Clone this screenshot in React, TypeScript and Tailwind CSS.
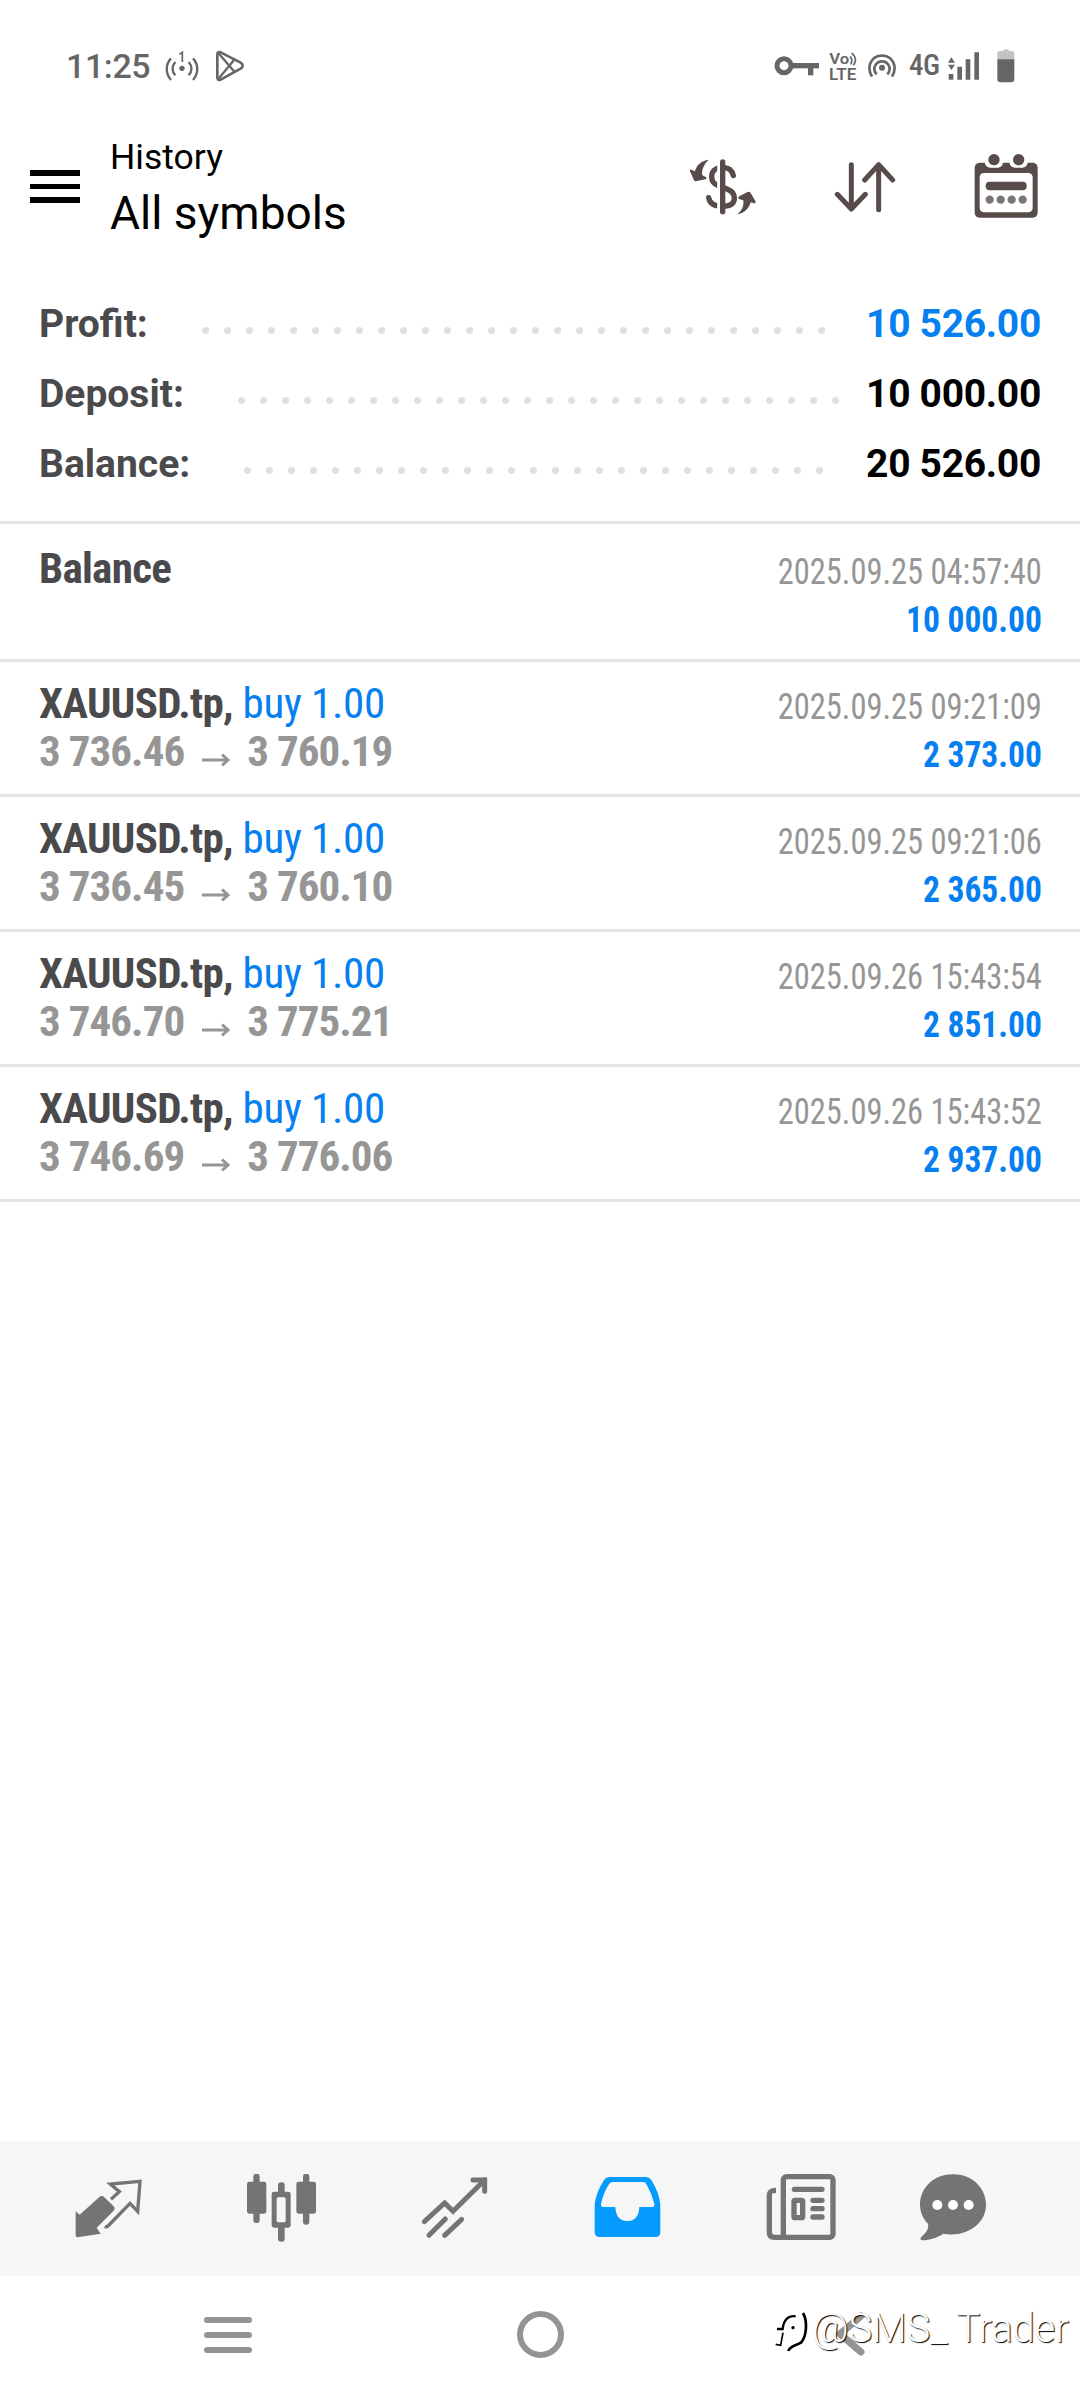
import React from "react";

type Deal = {
  title: string;
  side?: string;
  from?: string;
  to?: string;
  time: string;
  amount: string;
};

const summary = [
  { label: "Profit:", value: "10 526.00", dots: 29, start: "ml-[54px]", color: "text-[#067ff0]" },
  { label: "Deposit:", value: "10 000.00", dots: 28, start: "ml-[54px]", color: "text-black" },
  { label: "Balance:", value: "20 526.00", dots: 27, start: "ml-[54px]", color: "text-black" },
];

const deals: Deal[] = [
  { title: "Balance", time: "2025.09.25 04:57:40", amount: "10 000.00" },
  { title: "XAUUSD.tp,", side: "buy 1.00", from: "3 736.46", to: "3 760.19", time: "2025.09.25 09:21:09", amount: "2 373.00" },
  { title: "XAUUSD.tp,", side: "buy 1.00", from: "3 736.45", to: "3 760.10", time: "2025.09.25 09:21:06", amount: "2 365.00" },
  { title: "XAUUSD.tp,", side: "buy 1.00", from: "3 746.70", to: "3 775.21", time: "2025.09.26 15:43:54", amount: "2 851.00" },
  { title: "XAUUSD.tp,", side: "buy 1.00", from: "3 746.69", to: "3 776.06", time: "2025.09.26 15:43:52", amount: "2 937.00" },
];

function StatusBar() {
  return (
    <div className="h-[130px] pt-px flex items-center text-[#666] pl-[66px] pr-[65px]">
      <span className="text-[34px] font-medium w-[98px] leading-none tracking-[-0.4px]">11:25</span>
      <svg className="w-[36px] h-[36px]" viewBox="370 56 108 108" fill="none" stroke="currentColor" strokeWidth="7">
        <path d="M391 87C374 105 374 133 391 152M457 87C474 105 474 133 457 152" />
        <path d="M404 98C393 110 393 126 404 138M444 98C455 110 455 126 444 138" />
        <circle cx="424" cy="117" r="8" fill="currentColor" stroke="none" />
        <path d="M416 75L425 69V98" strokeWidth="5" />
      </svg>
      <svg className="w-[30px] h-[32px] ml-[15px]" viewBox="525 60 90 96" fill="none" stroke="currentColor" strokeWidth="8" strokeLinejoin="round">
        <path d="M532 74Q532 64 542 67L602 98Q614 107 602 116L542 149Q532 152 532 142Z" />
        <path d="M535 69L584 126M535 147L584 88" strokeWidth="7" />
      </svg>

      <div className="ml-auto flex items-center">
        <svg className="w-[46px] h-[30px]" viewBox="43 62 138 90" fill="none" stroke="currentColor">
          <circle cx="73" cy="106" r="21" strokeWidth="15" />
          <path d="M96 106H178" strokeWidth="16" />
          <path d="M153 108V135" strokeWidth="16" />
        </svg>
        <svg className="w-[32px] h-[38px] ml-[7px]" viewBox="202 50 96 114" fill="currentColor">
          <text x="209" y="101" fontSize="45" fontWeight="600" textLength="60" lengthAdjust="spacingAndGlyphs">Vo</text>
          <path d="M271 78Q281 89 273 102M276 68Q296 86 281 105" fill="none" stroke="currentColor" strokeWidth="5" />
          <text x="208" y="148" fontSize="51" fontWeight="600" textLength="82" lengthAdjust="spacingAndGlyphs">LTE</text>
        </svg>
        <svg className="w-[30px] h-[26px] ml-[8px]" viewBox="323 68 90 78" fill="none" stroke="currentColor" strokeWidth="8">
          <circle cx="368" cy="112" r="9" fill="currentColor" stroke="none" />
          <path d="M338 139C320 109 336 76 368 76C400 76 416 109 398 139" />
          <path d="M352 132C337 115 349 93 368 93C387 93 399 115 384 132" />
        </svg>
        <span className="text-[29px] font-medium font-stretch-condensed leading-none ml-[12px] w-[39px] tracking-[-0.6px]">4G</span>
        <svg className="w-[31px] h-[28px]" viewBox="566 65 93 84" fill="currentColor">
          <path d="M566 97L576 81L587 97ZM566 103L576 119L587 103ZM568 131H582V148H568ZM594 109H608V148H594ZM619 87H633V148H619ZM645 66H659V148H645Z" />
        </svg>
        <svg className="w-[18px] h-[34px] ml-[18px]" viewBox="713 56 54 102">
          <path d="M714 88V68Q714 62 722 62H730Q732 57 740 57Q748 57 750 62H757Q765 62 765 68V88Z" fill="#c4c4c4" />
          <path d="M714 87H765V146Q765 156 755 156H724Q714 156 714 146Z" fill="currentColor" />
        </svg>
      </div>
    </div>
  );
}

function Header() {
  return (
    <header className="h-[116px] flex items-center text-black pl-[30px] pr-[41px]">
      <button aria-label="Menu" className="w-[50px] flex flex-col gap-[8px] -mt-[3px]">
        <span className="h-[6px] bg-black" />
        <span className="h-[5px] bg-black" />
        <span className="h-[6px] bg-black" />
      </button>
      <div className="ml-[30px] h-[116px] flex flex-col">
        <span className="text-[35.5px] leading-[44px] mt-[5px]">History</span>
        <span className="text-[46px] leading-[56px] mt-[6px]">All symbols</span>
      </div>

      <div className="ml-auto flex items-center text-[#584c4a]">
        <svg className="w-[68px] h-[56px] -mt-[2px]" viewBox="85 87 204 168" fill="none" stroke="currentColor" strokeWidth="16" strokeLinecap="round">
          <path d="M218 137C214 118 203 112 185 112C165 112 153 124 153 140C153 160 168 166 185 172C208 179 221 186 221 205C221 222 206 229 185 229C162 229 147 222 144 203" />
          <path d="M174 98V242" stroke="#fff" strokeWidth="9" strokeLinecap="butt" />
          <path d="M186 96V245" />
          <path d="M144 89C121 92 107 106 103 124L92 119Q86 117 88 124L100 151Q102 155 109 153L134 148Q141 145 135 141L125 136C122 119 130 103 144 89Z" fill="currentColor" stroke="none" />
          <path d="M230 253C244 241 250 228 248 211L235 207Q230 204 236 199L259 187Q267 183 270 189L284 213Q287 222 280 220L270 217C266 235 249 251 230 253Z" fill="currentColor" stroke="none" />
        </svg>
        <svg className="w-[62px] h-[52px] ml-[77px] -mt-[2px]" viewBox="522 92 186 156" fill="none" stroke="currentColor" strokeWidth="15" strokeLinecap="round" strokeLinejoin="round">
          <path d="M574 103V236M532 192L574 236L616 192" />
          <path d="M656 238V103M614 149L656 103L698 149" />
        </svg>
        <svg className="w-[64px] h-[64px] ml-[78px] mr-px -mt-[4px]" viewBox="943 71 192 192">
          <rect x="945" y="97" width="189" height="165" rx="15" fill="currentColor" />
          <rect x="960" y="128" width="159" height="118" rx="13" fill="#fff" />
          <path d="M975 88V96Q978 112 992 112H1014Q1028 112 1030 96V88ZM1049 88V96Q1052 112 1066 112H1088Q1102 112 1104 96V88Z" fill="#fff" />
          <circle cx="1003" cy="88" r="17" fill="currentColor" />
          <circle cx="1077" cy="88" r="17" fill="currentColor" />
          <rect x="978" y="154" width="123" height="26" rx="12" fill="currentColor" />
          <g fill="#7b7674">
            <circle cx="990" cy="208" r="12.5" />
            <circle cx="1023" cy="208" r="12.5" />
            <circle cx="1056" cy="208" r="12.5" />
            <circle cx="1089" cy="208" r="12.5" />
          </g>
        </svg>
      </div>
    </header>
  );
}

function Summary() {
  return (
    <section className="pt-[43px] pb-[22px] pl-[39px] pr-[39px] border-b-[3px] border-[#e4e4e4]">
      {summary.map((row) => (
        <div key={row.label} className="h-[70px] flex items-center text-[39px] leading-[70px] font-bold">
          <span className="text-[#4a4a4d]">{row.label}</span>
          <span className={`flex gap-[15px] mt-[12px] ${row.start}`}>
            {Array.from({ length: row.dots }, (_, i) => (
              <i key={i} className="size-[7px] rounded-full bg-[#e0e0e0]" />
            ))}
          </span>
          <span className={`ml-auto whitespace-nowrap tracking-[-0.3px] ${row.color}`}>{row.value}</span>
        </div>
      ))}
    </section>
  );
}

function DealRow({ deal }: { deal: Deal }) {
  return (
    <div
      className={`flex justify-between pl-[39px] pr-[38px] border-b-[3px] border-[#e4e4e4] font-stretch-condensed whitespace-nowrap ${
        deal.side ? "h-[135px] pt-[17px]" : "h-[138px] pt-[20px]"
      }`}
    >
      <div className="text-[43px] leading-[48px]">
        <div>
          <span className="font-bold text-[#4a4a4d] tracking-[-0.7px]">{deal.title}</span>
          {deal.side && <span className="text-[#067ff0] tracking-[-0.3px]"> {deal.side}</span>}
        </div>
        {deal.from && (
          <div className="flex items-center font-bold text-[#969696]">
            <span className="tracking-[-0.95px]">{deal.from}</span>
            <svg className="w-[28px] h-[14px] ml-[18px] mr-[17px] mt-[17px]" viewBox="0 0 28 14" fill="none" stroke="currentColor" strokeWidth="3">
              <path d="M0 7H26M20 1.5L26 7L20 12.5" />
            </svg>
            <span className="tracking-[-0.95px]">{deal.to}</span>
          </div>
        )}
      </div>
      <div className="text-[36px] leading-[48px] text-right pt-[4px]">
        <div className="text-[#969696] origin-right scale-x-[0.902]">{deal.time}</div>
        <div className="font-bold text-[#067ff0] origin-right scale-x-[0.93]">{deal.amount}</div>
      </div>
    </div>
  );
}

function TabBar() {
  return (
    <nav className="h-[135px] bg-[#f6f6f6] flex items-center pl-[22px] text-[#747474]">
      <button aria-label="Quotes" className="w-[173px] flex justify-center">
        <svg className="w-[70px] h-[70px]" viewBox="102 131 210 210">
          <path d="M107 243L119 253L178 200Q186 194 193 201L221 228Q227 235 221 241L170 292L182 310L112 321Q107 321 107 315Z" fill="currentColor" />
          <path d="M213 207L238 184L211 161L300 153L293 243L270 219L204 287Q200 291 194 289" fill="none" stroke="currentColor" strokeWidth="10" />
        </svg>
      </button>
      <button aria-label="Charts" className="w-[173px] flex justify-center">
        <svg className="w-[70px] h-[70px]" viewBox="620 133 210 210" fill="currentColor">
          <rect x="639" y="132" width="19" height="148" rx="9" />
          <rect x="620" y="156" width="58" height="96" rx="7" />
          <rect x="788" y="132" width="19" height="153" rx="9" />
          <rect x="768" y="156" width="59" height="96" rx="7" />
          <rect x="713" y="158" width="20" height="178" rx="9" />
          <rect x="694" y="186" width="57" height="108" rx="7" />
          <rect x="709" y="203" width="27" height="75" rx="5" fill="#f6f6f6" />
        </svg>
      </button>
      <button aria-label="Trade" className="w-[173px] flex justify-center">
        <svg className="w-[70px] h-[70px]" viewBox="1138 131 210 210" fill="none" stroke="currentColor" strokeWidth="15">
          <path d="M1151 274L1212 218L1237 243L1332 149" strokeLinecap="round" />
          <path d="M1297 149H1332V183" strokeWidth="15" strokeLinecap="round" />
          <path d="M1165 315L1214 266M1212 315L1263 267" strokeLinecap="round" />
        </svg>
      </button>
      <button aria-label="History" className="w-[173px] flex justify-center text-[#069cff]">
        <svg className="w-[70px] h-[70px]" viewBox="99 132 210 210">
          <path d="M148 141H258Q268 141 274 150Q299 191 301 225V306Q301 321 286 321H119Q104 321 104 306V225Q106 191 132 150Q138 141 148 141Z" fill="currentColor" />
          <path d="M158 156H249Q256 156 259 162Q276 192 283 222Q284 231 276 231H238Q236 273 202 273Q168 273 166 231H130Q122 231 123 223Q128 193 147 163Q151 156 158 156Z" fill="#f6f6f6" />
        </svg>
      </button>
      <button aria-label="News" className="w-[173px] flex justify-center">
        <svg className="w-[70px] h-[70px]" viewBox="618 132 210 210" fill="none" stroke="currentColor" strokeWidth="16">
          <rect x="670" y="140" width="149" height="182" rx="10" />
          <path d="M648 181C634 181 628 184 628 196V307Q628 322 643 322H680" />
          <path d="M703 178H786M759 211H786M759 236H786M759 261H786" strokeLinecap="round" />
          <rect x="702" y="211" width="26" height="52" rx="3" />
        </svg>
      </button>
      <button aria-label="Messages" className="w-[132px] flex justify-center">
        <svg className="w-[70px] h-[70px]" viewBox="1074 131 210 210">
          <path d="M1179 132C1235 132 1278 172 1278 223C1278 282 1217 322 1150 310C1128 324 1104 330 1086 330Q1078 328 1084 320C1101 306 1107 292 1104 280C1090 266 1080 246 1080 223C1080 172 1122 132 1179 132Z" fill="currentColor" />
          <circle cx="1132" cy="224" r="15" fill="#fff" />
          <circle cx="1179" cy="224" r="15" fill="#fff" />
          <circle cx="1226" cy="224" r="15" fill="#fff" />
        </svg>
      </button>
    </nav>
  );
}

function SystemNav() {
  return (
    <div className="h-[116px] relative flex items-center pl-[204px] text-[#949494]">
      <div className="w-[48px] flex flex-col gap-[9px] pt-[2px]">
        <span className="h-[6px] rounded-full bg-[#949494]" />
        <span className="h-[6px] rounded-full bg-[#949494]" />
        <span className="h-[6px] rounded-full bg-[#949494]" />
      </div>
      <div className="size-[47px] ml-[265px] rounded-full border-[6px] border-[#949494]" />
      <svg className="w-[30px] h-[46px] ml-[272px]" viewBox="0 0 30 46" fill="none" stroke="currentColor" strokeWidth="7" strokeLinecap="round" strokeLinejoin="round">
        <path d="M25 5L4 23L25 41" />
      </svg>

      {/* watermark */}
      <div className="absolute left-[774px] top-[25px] flex items-center">
        <svg className="w-[36px] h-[44px] mt-[8px]" viewBox="103 132 108 132" fill="none" stroke="#fff" strokeWidth="14">
          <path d="M112 183H127C130 155 147 140 180 144C198 152 200 205 180 222C165 232 148 232 144 249" />
          <g stroke="#000" strokeWidth="7">
            <path d="M112 186H129C132 159 145 145 168 148" />
            <path d="M130 197L123 235L108 232" strokeWidth="5" />
            <path d="M190 138C205 164 200 208 185 226C170 236 150 236 146 252" strokeWidth="8" />
            <circle cx="160" cy="182" r="5" fill="#000" stroke="none" />
          </g>
        </svg>
        <span className="ml-[2px] text-[40px] leading-[56px] font-light text-white whitespace-nowrap tracking-[-0.1px] [text-shadow:1px_1px_1px_#000]">@SMS_ Trader</span>
      </div>
    </div>
  );
}

export default function App() {
  return (
    <div className="w-[1080px] h-[2392px] bg-white flex flex-col overflow-hidden font-[Roboto,sans-serif]">
      <StatusBar />
      <Header />
      <Summary />
      <main className="flex-1">
        {deals.map((deal) => (
          <DealRow key={deal.time} deal={deal} />
        ))}
      </main>
      <TabBar />
      <SystemNav />
    </div>
  );
}
